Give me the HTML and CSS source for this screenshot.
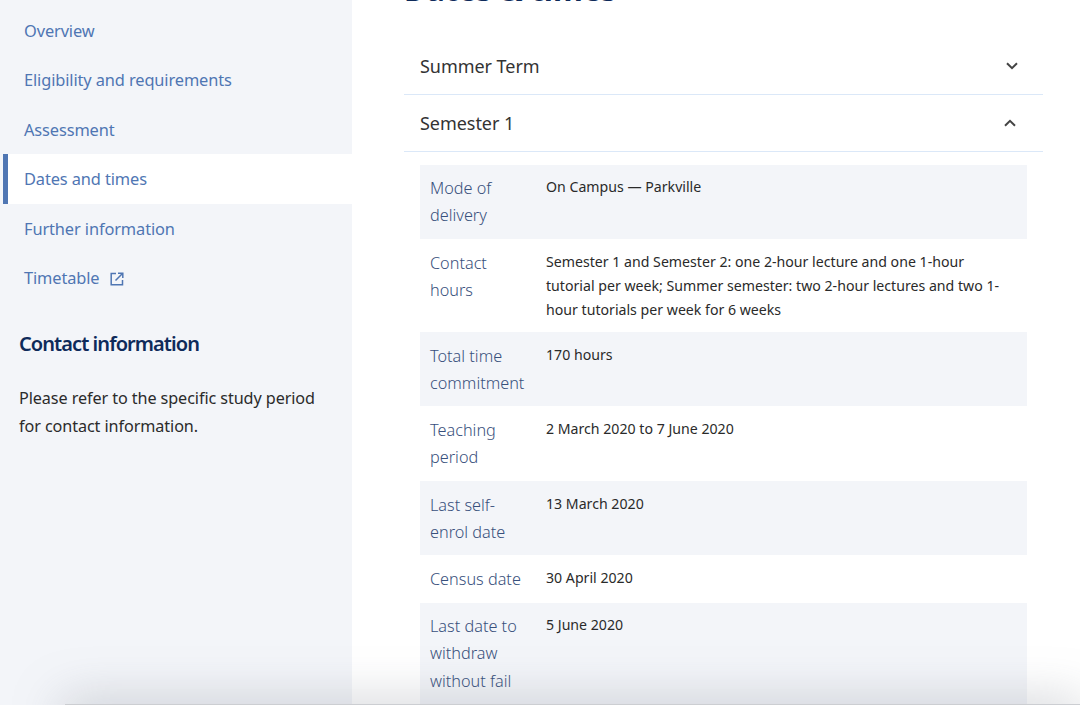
FILE: index.html
```html
<!DOCTYPE html>
<html lang="en">
<head>
<meta charset="utf-8">
<title>Dates and times</title>
<link rel="stylesheet" href="styles.css">
</head>
<body>
<div class="page">
  <aside class="sidebar">
    <nav class="nav">
      <a class="nav-item">Overview</a>
      <a class="nav-item">Eligibility and requirements</a>
      <a class="nav-item">Assessment</a>
      <a class="nav-item active">Dates and times</a>
      <a class="nav-item">Further information</a>
      <a class="nav-item">Timetable
        <svg class="ext" viewBox="0 0 14 14" width="14" height="14"><path d="M6 1.5H1.2v11.3h11.3V8M8 1.2h4.8V6M12.5 1.5 5.5 8.5" fill="none" stroke="currentColor" stroke-width="1.5"/></svg>
      </a>
    </nav>
    <h2 class="side-title">Contact information</h2>
    <p class="side-text">Please refer to the specific study period for contact information.</p>
  </aside>
  <main class="main">
    <h1 class="title">Dates &amp; times</h1>
    <div class="acc-head first">
      <span>Summer Term</span>
      <svg class="chev" viewBox="0 0 12 8" width="12" height="8"><path d="M1 1.2 6 6.2l5-5" fill="none" stroke="#444" stroke-width="2"/></svg>
    </div>
    <div class="acc-head">
      <span>Semester 1</span>
      <svg class="chev up" viewBox="0 0 12 8" width="12" height="8"><path d="M1 6.8 6 1.8l5 5" fill="none" stroke="#444" stroke-width="2"/></svg>
    </div>
    <div class="table">
      <div class="row"><div class="label">Mode of delivery</div><div class="value">On Campus — Parkville</div></div>
      <div class="row"><div class="label">Contact hours</div><div class="value">Semester 1 and Semester 2: one 2-hour lecture and one 1-hour tutorial per week; Summer semester: two 2-hour lectures and two 1-hour tutorials per week for 6 weeks</div></div>
      <div class="row"><div class="label">Total time commitment</div><div class="value">170 hours</div></div>
      <div class="row"><div class="label">Teaching period</div><div class="value">2 March 2020 to 7 June 2020</div></div>
      <div class="row"><div class="label">Last self-enrol date</div><div class="value">13 March 2020</div></div>
      <div class="row"><div class="label">Census date</div><div class="value">30 April 2020</div></div>
      <div class="row last"><div class="label">Last date to withdraw without fail</div><div class="value">5 June 2020</div></div>
    </div>
  </main>
</div>
<div class="shade"></div>
</body>
</html>
```

FILE: styles.css
```css
* { box-sizing: border-box; }
html, body { margin: 0; height: 705px; overflow: hidden; background: #fff; }
body { font-family: "Noto Sans", "Open Sans", sans-serif; color: #222; }
.page { display: flex; height: 705px; overflow: hidden; }
.sidebar { width: 352px; flex: none; background: #f3f5f9; padding-top: 5.5px; }
.nav { display: flex; flex-direction: column; padding-left: 3px; }
.nav-item { display: flex; align-items: center; height: 49.5px; padding-left: 21px; font-size: 16.4px; letter-spacing: -0.12px; color: #4f76b3; }
.nav-item.active { background: #fff; border-left: 5px solid #4f76b3; padding-left: 16px; }
.ext { margin-left: 10px; margin-top: 2px; }
.side-title { margin: 27.5px 0 0 19px; font-size: 20px; line-height: 28px; font-weight: 600; letter-spacing: -0.93px; color: #0e2a5a; }
.side-text { margin: 27px 20px 0 19px; font-size: 16.2px; line-height: 27.6px; color: #2b2b2b; letter-spacing: -0.09px; }
.main { flex: 1; padding: 0 37px 0 52px; min-width: 0; }
.title { margin: -27px 0 0; height: 32px; font-size: 30.6px; line-height: 32px; font-weight: 700; color: #0e2a5a; }
.acc-head { display: flex; justify-content: space-between; align-items: center; height: 57.3px; padding: 0 25px 0 16px; font-size: 18px; letter-spacing: -0.05px; color: #333; border-bottom: 1px solid #dbe8f8; }
.acc-head.first { margin-top: 32.5px; }
.chev.up { margin-right: 2px; }
.table { margin: 12.5px 16px 0; }
.row { display: flex; padding: 10.6px 0 9.4px; }
.row:nth-child(odd) { background: #f3f5f9; }
.row.last { min-height: 130px; }
.label { width: 126px; flex: none; padding: 0 14px 0 10px; font-size: 16.25px; font-weight: 300; line-height: 27.25px; color: #38507c; }
.value { flex: 1; padding-right: 15px; font-size: 14.15px; line-height: 24.3px; color: #2a2a2a; }
.shade { position: absolute; left: 65px; right: 0; top: 704px; height: 30px; border-top: 1px solid #ccced2; background: #ccc; box-shadow: 0 0 50px 3px rgba(120,125,135,.36); }
```
